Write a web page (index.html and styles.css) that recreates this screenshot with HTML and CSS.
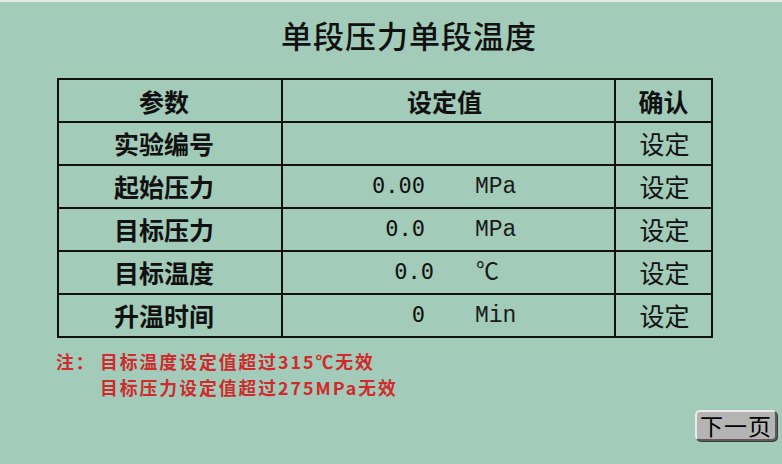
FILE: index.html
```html
<!DOCTYPE html>
<html lang="zh-CN">
<head>
<meta charset="utf-8">
<title>单段压力单段温度</title>
<link rel="stylesheet" href="styles.css">
</head>
<body>
<div class="topbar"></div>
<main class="screen">
  <h1 class="title">单段压力单段温度</h1>
  <table class="params">
    <colgroup>
      <col class="c-name">
      <col class="c-value">
      <col class="c-confirm">
    </colgroup>
    <tr class="head">
      <th class="h-name">参数</th>
      <th class="h-value">设定值</th>
      <th>确认</th>
    </tr>
    <tr>
      <td class="name">实验编号</td>
      <td class="value"></td>
      <td class="confirm">设定</td>
    </tr>
    <tr>
      <td class="name">起始压力</td>
      <td class="value"><span class="num">0.00</span><span class="unit">MPa</span></td>
      <td class="confirm">设定</td>
    </tr>
    <tr>
      <td class="name">目标压力</td>
      <td class="value"><span class="num">0.0</span><span class="unit">MPa</span></td>
      <td class="confirm">设定</td>
    </tr>
    <tr>
      <td class="name">目标温度</td>
      <td class="value"><span class="num num-shift">0.0</span><span class="unit">℃</span></td>
      <td class="confirm">设定</td>
    </tr>
    <tr>
      <td class="name">升温时间</td>
      <td class="value"><span class="num">0</span><span class="unit">Min</span></td>
      <td class="confirm">设定</td>
    </tr>
  </table>
  <div class="note">
    <span class="note-label">注：</span>
    <div class="note-lines">
      <div>目标温度设定值超过315℃无效</div>
      <div>目标压力设定值超过275MPa无效</div>
    </div>
  </div>
  <div class="actions">
    <button class="next">下一页</button>
  </div>
</main>
</body>
</html>
```

FILE: styles.css
```css
html, body {
  margin: 0;
  padding: 0;
}

body {
  width: 782px;
  height: 464px;
  overflow: hidden;
  background: #a2cbb9;
  font-family: "Noto Sans CJK SC", "Noto Sans", sans-serif;
  color: #111;
}

.topbar {
  height: 2px;
  background: #e6e8e7;
}

.screen {
  display: flex;
  flex-direction: column;
  height: 462px;
}

.screen > * {
  flex-shrink: 0;
}

.title {
  margin: 0;
  height: 76px;
  padding-top: 11px;
  padding-left: 36px;
  box-sizing: border-box;
  text-align: center;
  font-size: 31px;
  line-height: 44px;
  font-weight: 500;
  letter-spacing: 1px;
}

.params {
  margin-left: 57px;
  width: 654px;
  border-collapse: collapse;
  table-layout: fixed;
  border: 2px solid #111;
}

.c-name { width: 224px; }
.c-value { width: 333px; }
.c-confirm { width: 97px; }

.params th,
.params td {
  border: 2px solid #111;
  padding: 0;
  text-align: center;
  font-size: 25px;
  height: 40.6px;
  line-height: 40px;
  vertical-align: middle;
}

.params .head th {
  height: 41px;
  font-weight: 700;
}

.params .head th.h-name {
  padding-right: 12px;
}

.params .head th.h-value {
  padding-right: 8px;
}

.params td.name {
  font-weight: 700;
  padding-right: 12px;
}

.params td.confirm {
  font-weight: 400;
  padding-left: 2px;
}

.params td.value {
  text-align: left;
}

.num,
.unit {
  display: inline-block;
  height: 40px;
  line-height: 40px;
  vertical-align: top;
}

.num {
  width: 142px;
  text-align: right;
  font-family: "DejaVu Sans Mono", "Liberation Mono", monospace;
  font-size: 22px;
  font-weight: 400;
}

.num-shift {
  width: 151px;
}

.num-shift + .unit {
  margin-left: 42px;
}

.unit {
  margin-left: 50px;
  padding-top: 1px;
  font-family: "Liberation Mono", "DejaVu Sans Mono", monospace;
  font-size: 23px;
  font-weight: 400;
  color: #1a1a1a;
}

.note {
  display: flex;
  margin-top: 10px;
  margin-left: 56px;
  color: #cf2a2c;
  font-size: 17.8px;
  line-height: 26px;
  letter-spacing: 2px;
  font-weight: 700;
}

.note-label {
  width: 44px;
}

.actions {
  display: flex;
  justify-content: flex-end;
  margin-top: 10px;
  padding-right: 5px;
}

.next {
  width: 82px;
  height: 31px;
  padding: 0;
  background: #b4b4b4;
  border: 2px solid #5c5c5c;
  border-top-color: #eaeaea;
  border-left-color: #eaeaea;
  border-radius: 5px;
  box-shadow: 1px 1px 0 #3a3a3a;
  font-family: "Noto Sans CJK SC", sans-serif;
  font-size: 23px;
  line-height: 26px;
  letter-spacing: 1px;
  color: #000;
}
```
